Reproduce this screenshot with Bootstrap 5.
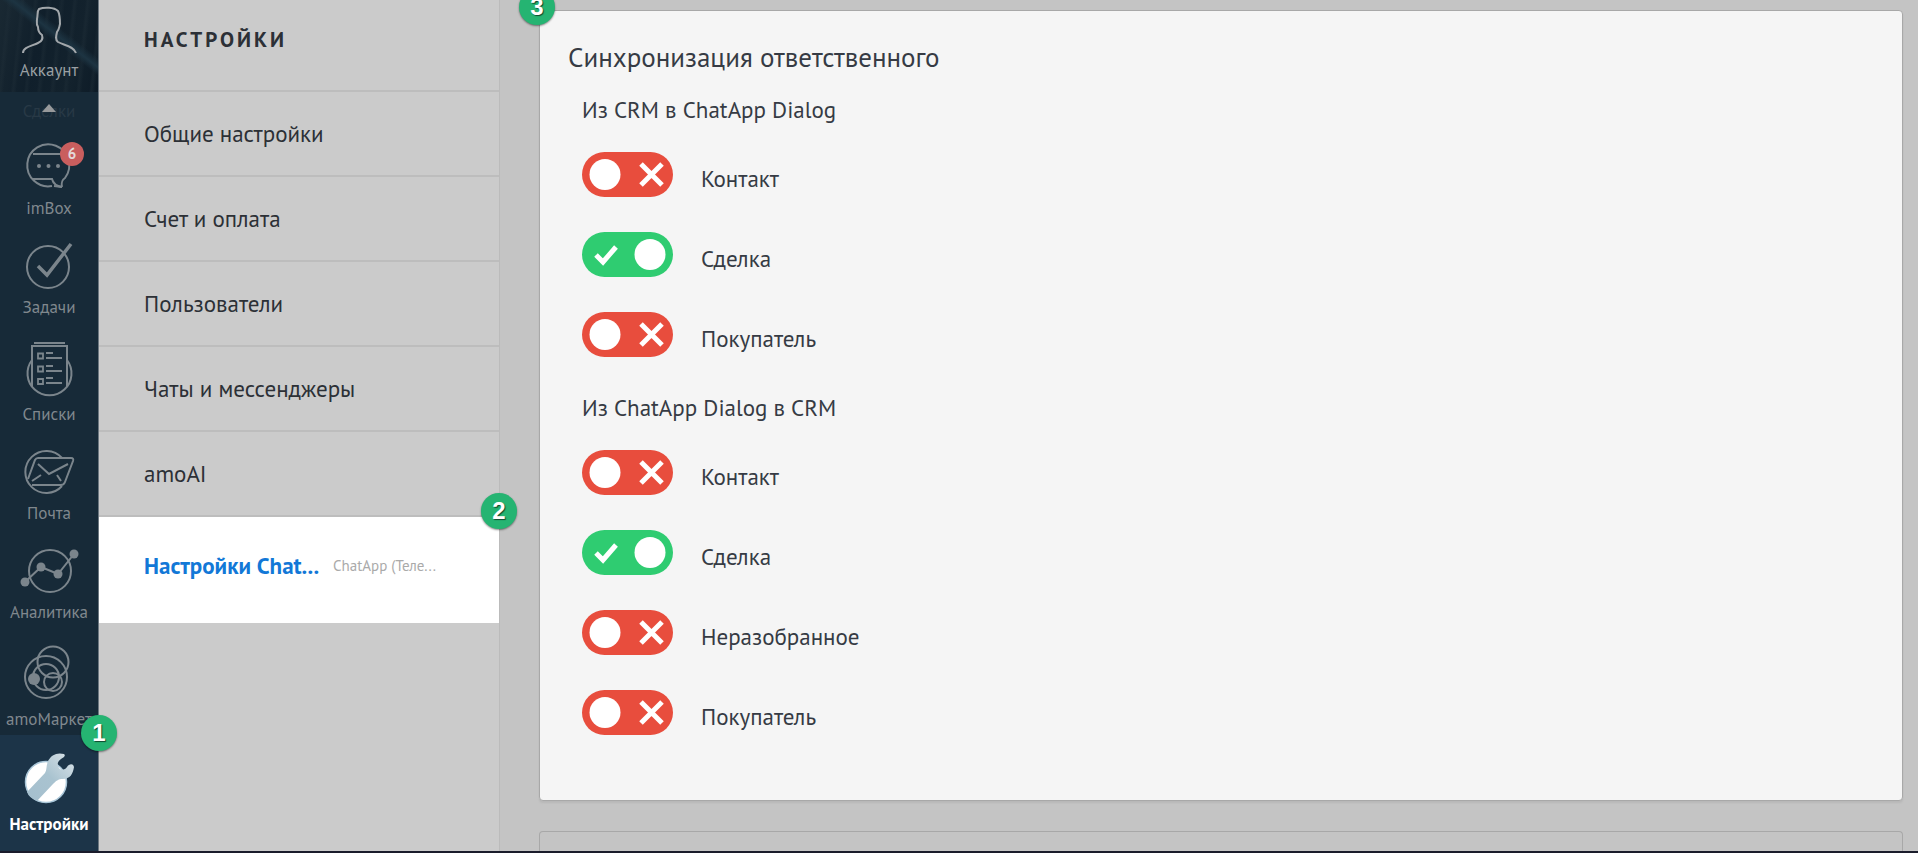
<!DOCTYPE html>
<html lang="ru">
<head>
<meta charset="utf-8">
<meta name="viewport" content="width=device-width, initial-scale=1">
<title>Настройки</title>
<link href="https://cdn.jsdelivr.net/npm/bootstrap@5.3.0/dist/css/bootstrap.min.css" rel="stylesheet">
<style>
  body { font-family: "PT Sans", Lato, "Noto Sans", sans-serif; font-size: 23px; line-height: 32px; color: #363b44; background: #c4c4c4; }
  .app-shell { height: 100vh; border-bottom: 2px solid #1a1c2b; }

  /* left rail */
  .rail { width: 99px; background: #172a38; border-right: 1px solid #6c7780; }
  .rail-item { padding-top: 19px; color: #80888e; font-size: 17px; line-height: 24px; text-decoration: none; }
  .rail-item svg, .rail-account svg { display: block; width: 98px; fill: none; stroke: #7b858c; stroke-width: 2; }
  .rail-account { height: 92px; font-size: 17px; line-height: 24px; color: #9aa0a4; text-decoration: none;
    background:
      linear-gradient(38deg, transparent 55%, #1d3442 60%, transparent 66%),
      repeating-linear-gradient(96deg, #0e1c2700 0 7px, #1f2e3866 9px 10px, #0e1c2700 13px),
      linear-gradient(105deg, #1a2933, #101f2b 40%, #13222d 75%, #0d1b27); }
  .rail-account svg { stroke: #a2a7ab; }
  .rail-scroll { height: 29px; padding-top: 7px; font-size: 17px; line-height: 24px; color: #283946; }
  .rail-arrow { position: absolute; left: 42px; top: 12px; border: 7px solid transparent; border-top: 0; border-bottom: 8px solid #97999b; }
  .rail-count { position: absolute; left: 60px; top: 21px; width: 24px; height: 24px; background: #c95e5e; color: #e3d9d9; font-size: 15px; line-height: 24px; font-weight: 700; }
  .rail-solid { fill: #7b858c; stroke: none; }
  .rail-active { padding-top: 13px; background: #1c3448; color: #fff; font-weight: 700; }

  /* settings menu */
  .side-menu { width: 401px; background: #cbcbcb; border-right: 1px solid #bbb; }
  .side-title { height: 92px; padding: 27px 45px; border-bottom: 2px solid #bdbdbd; font-size: 21px; font-weight: 700; letter-spacing: 3px; color: #2c3036; }
  .side-link { height: 85px; padding: 0 45px; border-bottom: 2px solid #bdbdbd; color: #2c3036; text-decoration: none; }
  .side-current { height: 106px; padding: 0 65px 9px 45px; background: #fff; gap: 15px; }
  .side-current-name { width: 174px; color: #1278d7; font-weight: 700; }
  .side-current-note { width: 102px; color: #aaa; font-size: 15px; }

  /* content */
  .content { padding: 10px 15px 0 39px; gap: 30px; }
  .panel { border: 1px solid #a8a8a8; border-radius: 4px; }
  .panel-main { background: #f5f5f5; padding: 28px 28px 30px; box-shadow: 0 2px 2px #b8b8b8; }
  .panel-title { font-size: 27px; line-height: 36px; margin-bottom: 19px; font-weight: 400; }
  .panel-group { padding-left: 14px; }
  .panel-sub { font-size: 23px; line-height: 32px; margin-bottom: 26px; font-weight: 400; }
  .sync-row { height: 45px; margin-bottom: 35px; gap: 28px; }
  .sync-row label { padding-top: 8px; }
  .toggle.form-check-input { width: 91px; height: 45px; margin: 0; border: 0; border-radius: 23px; cursor: pointer;
    background: #e84d3d url("data:image/svg+xml,%3Csvg xmlns='http://www.w3.org/2000/svg' viewBox='0 0 91 45'%3E%3Ccircle cx='23' cy='22.500' r='15.500' fill='white'/%3E%3Cpath d='M59 12 80 33M80 12 59 33' stroke='white' stroke-width='5'/%3E%3C/svg%3E") center / 91px 45px no-repeat; }
  .toggle.form-check-input:checked { background: #2fcc71 url("data:image/svg+xml,%3Csvg xmlns='http://www.w3.org/2000/svg' viewBox='0 0 91 45'%3E%3Ccircle cx='68' cy='22.500' r='15.500' fill='white'/%3E%3Cpath d='M14 23 21 30 34 15' fill='none' stroke='white' stroke-width='5'/%3E%3C/svg%3E") center / 91px 45px no-repeat; }

  /* numbered steps */
  .step-mark { position: absolute; z-index: 3; width: 36px; height: 36px; border-radius: 50%; background: #25b472; color: #fff; box-shadow: 0 1px 2px #0007; text-shadow: 1px 1px 1px #0009;
    font: 700 24px/36px "Liberation Sans", sans-serif; text-align: center; }
  .step-1 { right: -19px; top: -20px; }
  .step-2 { right: -18px; top: -24px; }
  .step-3 { left: -21px; top: -22px; }
</style>
</head>
<body>
<div class="app-shell d-flex overflow-hidden">

  <nav class="rail d-flex flex-column flex-shrink-0 text-center text-nowrap" aria-label="Разделы">
    <a href="#" class="rail-account d-block">
      <svg height="58" viewBox="0 0 98 58"><path d="M23 53C23 47 32 46 38 43 43 41 43 38 42 35 39 33 38 30 38 27 36 24 37 21 37 19 38 15 37 11 39 9 44 7 54 7 58 11 60 15 60 20 60 24 59 28 59 30 57 32 56 36 55 40 58 42 63 45 74 46 76 53"/></svg>
      Аккаунт
    </a>
    <div class="rail-scroll position-relative">Сделки<span class="rail-arrow"></span></div>
    <a href="#" class="rail-item position-relative">
      <svg height="56" viewBox="0 0 98 56"><path d="M62 47C56 46 53 43 52 39H33M62 47C61 42 62 40 65 38A21 21 0 1 0 52 46M33 14H62"/><path d="M54 46 62 47"/><g class="rail-solid"><circle cx="39" cy="26" r="2"/><circle cx="48.500" cy="26" r="2"/><circle cx="58" cy="26" r="2"/></g></svg>
      imBox<span class="rail-count rounded-circle">6</span>
    </a>
    <a href="#" class="rail-item">
      <svg height="56" viewBox="0 0 98 56"><circle cx="48" cy="28" r="21"/><path d="M38 27 47 36 71 5" stroke-width="3.500"/></svg>
      Задачи
    </a>
    <a href="#" class="rail-item">
      <svg height="64" viewBox="0 0 98 64"><path d="M34 5H65M32 49V8H67V49M32 22A22 22 0 1 0 67 22"/><path d="M38 15.500H43V20.500H38ZM38 28.500H43V33.500H38ZM38 41H43V46H38ZM46 15H53M46 20H62M46 28H53M46 33H62M46 40H53M46 45H62" stroke-width="1.800"/></svg>
      Списки
    </a>
    <a href="#" class="rail-item">
      <svg height="56" viewBox="0 0 98 56"><path d="M62 13A21 21 0 1 0 62 41"/><path d="M28 34 35 15Q36 13 38 13H71Q74 13 73 16L65 37Q64 40 61 40H32M38 19 49 29 68 19M41 30 32 36M57 30 61 36"/></svg>
      Почта
    </a>
    <a href="#" class="rail-item">
      <svg height="56" viewBox="0 0 98 56"><circle cx="50" cy="27" r="21"/><path d="M25 38 41 23 58 30 74 10"/><g class="rail-solid"><circle cx="25" cy="38" r="4.500"/><circle cx="41" cy="23" r="4.500"/><circle cx="58" cy="30" r="4.500"/><circle cx="74" cy="10" r="4.500"/></g></svg>
      Аналитика
    </a>
    <a href="#" class="rail-item">
      <svg height="64" viewBox="0 0 98 64" stroke-width="1.800"><circle cx="46" cy="34" r="21"/><circle cx="53" cy="19" r="15.500"/><circle cx="46" cy="34" r="13"/><circle cx="53" cy="39" r="9"/><circle class="rail-solid" cx="34" cy="36" r="6"/></svg>
      amoМаркет
    </a>
    <a href="#" class="rail-item rail-active position-relative flex-grow-1 mt-1" aria-current="page">
      <svg height="64" viewBox="0 0 98 64">
        <defs><linearGradient id="steel" x1="1" y1="0" x2="0" y2="1"><stop offset="0" stop-color="#dce4e9"/><stop offset=".5" stop-color="#a9c3d0"/><stop offset="1" stop-color="#a5bfce"/></linearGradient></defs>
        <circle cx="46" cy="34" r="20.500" fill="#fff" stroke="#a9c6d8" stroke-width="1.500"/>
        <path d="M27 44 45 25C47 22 46 18 48 13 51 7 57 4 64 6 66 8 64 9 61 11 57 14 57 17 59 20 61 23 65 22 67 19 69 16 73 15 74 19 73 26 70 31 63 31 58 31 56 33 53 36L37 53Q29 50 27 44Z" fill="url(#steel)" stroke="none"/>
      </svg>
      Настройки<span class="step-mark step-1">1</span>
    </a>
  </nav>

  <aside class="side-menu flex-shrink-0">
    <h1 class="side-title m-0">НАСТРОЙКИ</h1>
    <a href="#" class="side-link d-flex align-items-center">Общие настройки</a>
    <a href="#" class="side-link d-flex align-items-center">Счет и оплата</a>
    <a href="#" class="side-link d-flex align-items-center">Пользователи</a>
    <a href="#" class="side-link d-flex align-items-center">Чаты и мессенджеры</a>
    <a href="#" class="side-link d-flex align-items-center">amoAI</a>
    <a href="#" class="side-current d-flex align-items-center position-relative text-decoration-none text-nowrap">
      <span class="side-current-name">Настройки Chat...</span>
      <span class="side-current-note">ChatApp (Теле...</span>
      <span class="step-mark step-2">2</span>
    </a>
  </aside>

  <main class="content d-flex flex-column flex-grow-1">
    <section class="panel panel-main position-relative">
      <span class="step-mark step-3">3</span>
      <h2 class="panel-title">Синхронизация ответственного</h2>
      <div class="panel-group">
        <h3 class="panel-sub">Из CRM в ChatApp Dialog</h3>
        <div class="sync-row d-flex align-items-center"><input class="form-check-input toggle" type="checkbox" role="switch" id="out-contact"><label for="out-contact">Контакт</label></div>
        <div class="sync-row d-flex align-items-center"><input class="form-check-input toggle" type="checkbox" role="switch" id="out-deal" checked><label for="out-deal">Сделка</label></div>
        <div class="sync-row d-flex align-items-center"><input class="form-check-input toggle" type="checkbox" role="switch" id="out-buyer"><label for="out-buyer">Покупатель</label></div>
        <h3 class="panel-sub">Из ChatApp Dialog в CRM</h3>
        <div class="sync-row d-flex align-items-center"><input class="form-check-input toggle" type="checkbox" role="switch" id="in-contact"><label for="in-contact">Контакт</label></div>
        <div class="sync-row d-flex align-items-center"><input class="form-check-input toggle" type="checkbox" role="switch" id="in-deal" checked><label for="in-deal">Сделка</label></div>
        <div class="sync-row d-flex align-items-center"><input class="form-check-input toggle" type="checkbox" role="switch" id="in-unsorted"><label for="in-unsorted">Неразобранное</label></div>
        <div class="sync-row d-flex align-items-center"><input class="form-check-input toggle" type="checkbox" role="switch" id="in-buyer"><label for="in-buyer">Покупатель</label></div>
      </div>
    </section>
    <section class="panel flex-grow-1 border-bottom-0 rounded-bottom-0"></section>
  </main>
</div>
<script src="https://cdn.jsdelivr.net/npm/bootstrap@5.3.0/dist/js/bootstrap.bundle.min.js"></script>
</body>
</html>
